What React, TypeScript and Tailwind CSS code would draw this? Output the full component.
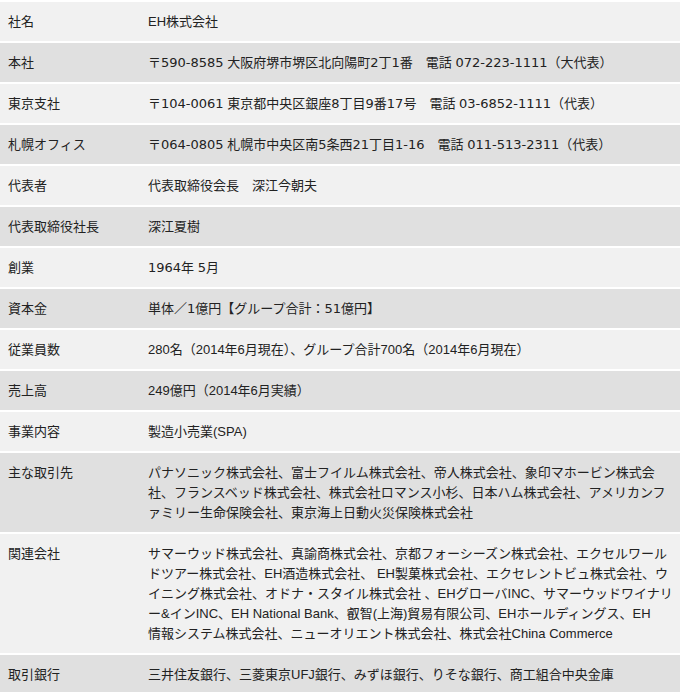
import React from "react";

type Row = { label: string; value: React.ReactNode; dark: boolean };

function fmt(s: string): React.ReactNode {
  const parts = s.split(/(\d[\d-]*\d|\d)/);
  return parts.map((p, i) =>
    i % 2 === 1 ? (
      <span key={i} style={{ fontFamily: '"DejaVu Sans", sans-serif' }}>
        {p}
      </span>
    ) : (
      <React.Fragment key={i}>{p}</React.Fragment>
    )
  );
}

const rows: Row[] = [
  { label: "社名", value: "EH株式会社", dark: false },
  { label: "本社", value: fmt("〒590-8585 大阪府堺市堺区北向陽町2丁1番　電話 072-223-1111（大代表）"), dark: true },
  { label: "東京支社", value: fmt("〒104-0061 東京都中央区銀座8丁目9番17号　電話 03-6852-1111（代表）"), dark: false },
  { label: "札幌オフィス", value: fmt("〒064-0805 札幌市中央区南5条西21丁目1-16　電話 011-513-2311（代表）"), dark: true },
  { label: "代表者", value: "代表取締役会長　深江今朝夫", dark: false },
  { label: "代表取締役社長", value: "深江夏樹", dark: true },
  { label: "創業", value: fmt("1964年 5月"), dark: false },
  { label: "資本金", value: fmt("単体／1億円【グループ合計：51億円】"), dark: true },
  { label: "従業員数", value: "280名（2014年6月現在）、グループ合計700名（2014年6月現在）", dark: false },
  { label: "売上高", value: "249億円（2014年6月実績）", dark: true },
  { label: "事業内容", value: "製造小売業(SPA)", dark: false },
  {
    label: "主な取引先",
    value: (
      <>
        パナソニック株式会社、富士フイルム株式会社、帝人株式会社、象印マホービン株式会
        <br />
        社、フランスベッド株式会社、株式会社ロマンス小杉、日本ハム株式会社、アメリカンフ
        <br />
        ァミリー生命保険会社、東京海上日動火災保険株式会社
      </>
    ),
    dark: true,
  },
  {
    label: "関連会社",
    value: (
      <>
        サマーウッド株式会社、真諭商株式会社、京都フォーシーズン株式会社、エクセルワール
        <br />
        ドツアー株式会社、EH酒造株式会社、 EH製菓株式会社、エクセレントビュ株式会社、ウ
        <br />
        イニング株式会社、オドナ・スタイル株式会社 、EHグローバINC、サマーウッドワイナリ
        <br />
        ー&amp;インINC、EH National Bank、叡智(上海)貿易有限公司、EHホールディングス、EH
        <br />
        情報システム株式会社、ニューオリエント株式会社、株式会社China Commerce
      </>
    ),
    dark: false,
  },
  { label: "取引銀行", value: "三井住友銀行、三菱東京UFJ銀行、みずほ銀行、りそな銀行、商工組合中央金庫", dark: true },
];

export default function App() {
  return (
    <div
      className="w-[680px] h-[692px] overflow-hidden bg-white pt-[2px] flex flex-col gap-[2px] text-[13px] leading-[20px] text-[#222]"
      style={{ fontFamily: '"Liberation Sans", "Noto Sans CJK JP", sans-serif' }}
    >
      {rows.map((r) => (
        <div
          key={r.label}
          className={`flex shrink-0 ${r.dark ? "bg-[#e0e0e0]" : "bg-[#f1f1f1]"}`}
        >
          <div className="w-[140px] shrink-0 pl-[8px] py-[9.5px] whitespace-nowrap">{r.label}</div>
          <div className="flex-1 pl-[8px] pr-[8px] py-[9.5px] whitespace-nowrap">{r.value}</div>
        </div>
      ))}
    </div>
  );
}
